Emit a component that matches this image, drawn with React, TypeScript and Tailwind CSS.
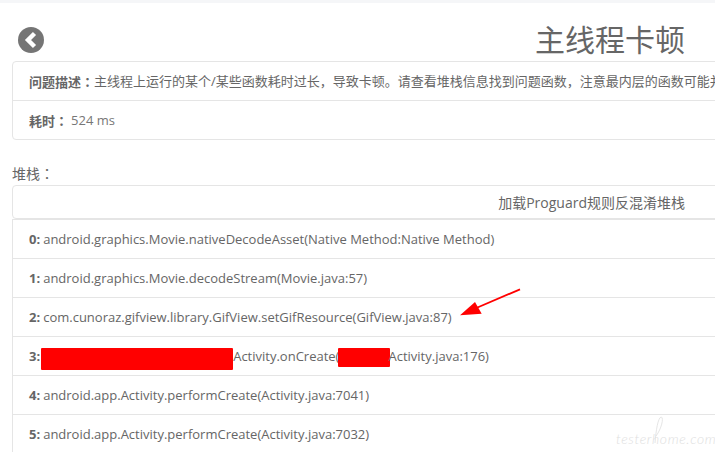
import React from 'react';

const stack = [
  'android.graphics.Movie.nativeDecodeAsset(Native Method:Native Method)',
  'android.graphics.Movie.decodeStream(Movie.java:57)',
  'com.cunoraz.gifview.library.GifView.setGifResource(GifView.java:87)',
  null,
  'android.app.Activity.performCreate(Activity.java:7041)',
  'android.app.Activity.performCreate(Activity.java:7032)',
];

const BackIcon = () => (
  <svg width="26" height="26" viewBox="0 0 26 26">
    <circle cx="13" cy="13" r="13" fill="#757575" />
    <path d="M16.5 6.5 L10 13 L16.5 19.5" fill="none" stroke="#fff" strokeWidth="4.4" />
  </svg>
);

// the colon sits centred in its cell in the reference, which is the TC form of the glyph
const Colon = () => <span style={{ fontFamily: '"Noto Sans CJK TC", sans-serif' }}>：</span>;

const StackRow = ({ index, text }: { index: number; text: string | null }) => (
  <div className="h-[39px] flex items-center px-4 pt-[2px] border-b border-[#e5e5e5] whitespace-nowrap">
    <b className="font-bold mr-[3px]">{index}:</b>
    {text ?? (
      <>
        <span className="w-[192px] h-[22px] rounded-[1px] bg-[#ff0000] -ml-[2px] mt-[4px] shrink-0" />
        Activity.onCreate(
        <span className="w-[52px] h-[19px] rounded-[1px] bg-[#ff0000] -ml-[1px] -mr-[2px] shrink-0" />
        Activity.java:176)
      </>
    )}
  </div>
);

export default function App() {
  return (
    <div
      className="relative w-[715px] h-[452px] overflow-hidden bg-white text-[13px] text-[#666666]"
      style={{ fontFamily: '"Open Sans", "Noto Sans CJK SC", sans-serif' }}
    >
      <div className="h-[3px] bg-[#f5f6f8]" />

      <div className="h-[58px] pt-6 pb-2 pl-[18px] pr-[30px] flex items-center justify-between">
        <BackIcon />
        <h1 className="text-[30px] font-normal leading-none text-[#666666]">主线程卡顿</h1>
      </div>

      <div className="ml-3 w-[760px] border border-[#e5e5e5] rounded-[4px]">
        <div className="h-[39px] flex items-center px-4 pt-[2px] border-b border-[#e5e5e5] whitespace-nowrap">
          <b className="font-bold">问题描述<Colon /></b>
          主线程上运行的某个/某些函数耗时过长，导致卡顿。请查看堆栈信息找到问题函数，注意最内层的函数可能并不是问题函数。
        </div>
        <div className="h-[38px] flex items-center px-4 pt-[2px]">
          <b className="font-bold mr-[3px]">耗时<Colon /></b>
          <span className="text-[#777777]">524 ms</span>
        </div>
      </div>

      <div className="ml-3 mt-[22px] h-[23px] leading-[22px] text-[14px]">堆栈<Colon /></div>

      <div className="ml-3 w-[760px] h-[34px] border border-[#e5e5e5] rounded-[4px] flex items-center justify-end pr-[86px] text-[14px]">
        加载Proguard规则反混淆堆栈
      </div>

      <div className="ml-3 w-[760px] border-l border-t border-[#e5e5e5]">
        {stack.map((text, i) => (
          <StackRow key={i} index={i} text={text} />
        ))}
      </div>

      <svg className="absolute left-[455px] top-[285px]" width="70" height="35" viewBox="455 285 70 35">
        <path d="M520 289.3 L474 309" stroke="#ff0000" strokeWidth="1.8" fill="none" />
        <path d="M460 315.3 L475 302 L481.7 313.7 Z" fill="#ff0000" />
      </svg>

      {/* watermark: the tall loop of the h is drawn over the text */}
      <span
        className="absolute left-[616px] top-[428px] text-[14px] italic font-light tracking-[0.6px] text-[#e0e0e0] whitespace-nowrap"
        style={{ fontFamily: '"Lato", sans-serif' }}
      >
        testerhome.com
      </span>
      <svg className="absolute left-[650px] top-[414px]" width="18" height="32" viewBox="650 414 18 32">
        <path d="M655 443 C656 430 658 418 661 417 C664 417 662 428 656 436" stroke="#dedede" strokeWidth="0.8" fill="none" />
      </svg>
    </div>
  );
}
